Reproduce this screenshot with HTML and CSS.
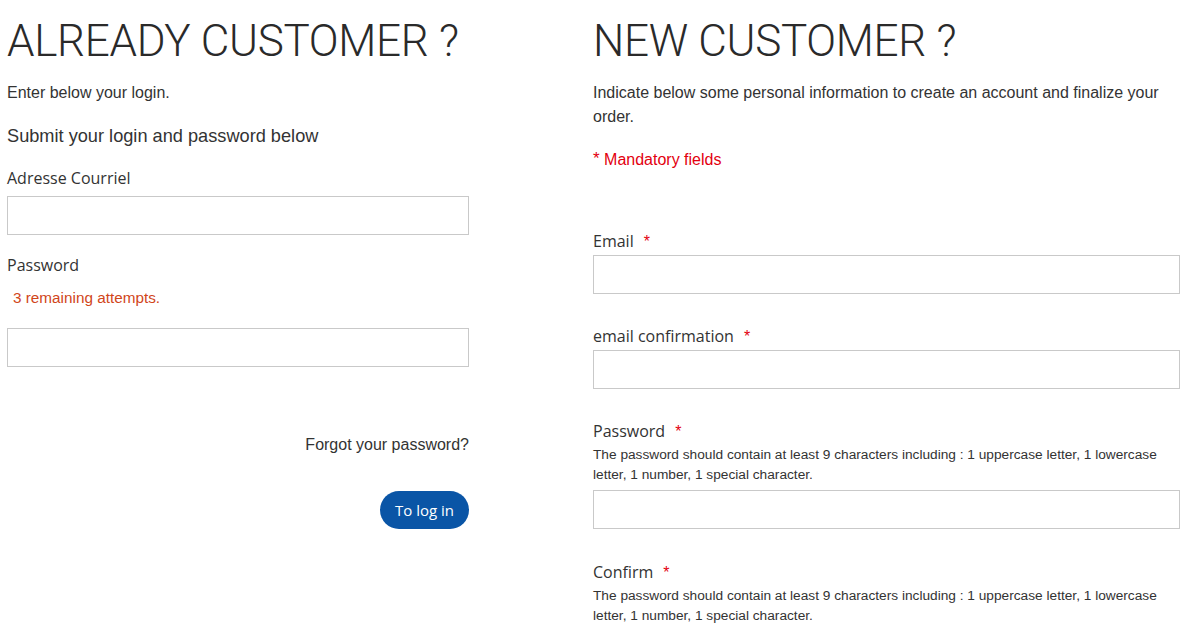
FILE: index.html
```html
<!DOCTYPE html>
<html lang="en">
<head>
<meta charset="utf-8">
<title>Login</title>
<link rel="stylesheet" href="styles.css">
</head>
<body>
<main class="page">
  <section class="col col-login">
    <h1 class="title">ALREADY CUSTOMER ?</h1>
    <p class="intro">Enter below your login.</p>
    <p class="subtitle">Submit your login and password below</p>
    <label class="label label-first">Adresse Courriel</label>
    <input class="field field-tight" type="text">
    <label class="label label-pass">Password</label>
    <p class="attempts">3 remaining attempts.</p>
    <input class="field field-after-attempts" type="password">
    <a class="forgot">Forgot your password?</a>
    <button class="btn-login" type="button">To log in</button>
  </section>
  <section class="col col-register">
    <h1 class="title">NEW CUSTOMER ?</h1>
    <p class="intro">Indicate below some personal information to create an account and finalize your order.</p>
    <p class="mandatory"><span class="mstar">*</span> Mandatory fields</p>
    <div class="group group-first">
      <label class="label">Email<span class="req">*</span></label>
      <input class="field" type="text">
    </div>
    <div class="group">
      <label class="label">email confirmation<span class="req">*</span></label>
      <input class="field" type="text">
    </div>
    <div class="group">
      <label class="label">Password<span class="req">*</span></label>
      <p class="help">The password should contain at least 9 characters including : 1 uppercase letter, 1 lowercase letter, 1 number, 1 special character.</p>
      <input class="field field-help" type="password">
    </div>
    <div class="group group-last">
      <label class="label">Confirm<span class="req">*</span></label>
      <p class="help">The password should contain at least 9 characters including : 1 uppercase letter, 1 lowercase letter, 1 number, 1 special character.</p>
    </div>
  </section>
</main>
</body>
</html>
```

FILE: styles.css
```css
* { box-sizing: border-box; }
html, body { margin: 0; padding: 0; background: #fff; }
body {
  font-family: "Liberation Sans", Arial, sans-serif;
  color: #333;
  width: 1200px;
  height: 630px;
  overflow: hidden;
}
.page {
  display: grid;
  grid-template-columns: 462px 587px;
  column-gap: 124px;
  padding-left: 7px;
  align-items: start;
}
.col {
  display: flex;
  flex-direction: column;
  align-items: stretch;
}
.title {
  margin: 19px 0 0 0;
  font-family: Roboto, "Liberation Sans", sans-serif;
  font-weight: 300;
  font-size: 44px;
  line-height: 44px;
  letter-spacing: -0.3px;
  color: #2a2a2a;
  white-space: nowrap;
}
.intro {
  margin: 18px 0 0 0;
  font-size: 16px;
  line-height: 24px;
}
.subtitle {
  margin: 19px 0 0 0;
  font-size: 18.2px;
  line-height: 24px;
}
.label {
  display: block;
  font-family: "Open Sans", "Noto Sans", sans-serif;
  font-size: 16px;
  line-height: 22px;
  color: #333;
}
.label-first { margin-top: 19px; }
.label-pass { margin-top: 19px; }
.field {
  display: block;
  width: 100%;
  height: 39px;
  margin: 2px 0 0 0;
  border: 1px solid #c9c9c9;
  border-radius: 0;
  background: #fff;
  padding: 0 10px;
  font-size: 16px;
  outline: none;
}
.field-tight { margin-top: 7px; }
.attempts {
  margin: 12px 0 0 0;
  padding-left: 6px;
  font-size: 15.3px;
  line-height: 20px;
  color: #d1461a;
}
.field-after-attempts { margin-top: 20px; }
.forgot {
  margin-top: 66px;
  align-self: flex-end;
  font-size: 16px;
  line-height: 24px;
  color: #333;
}
.btn-login {
  margin-top: 34px;
  align-self: flex-end;
  height: 38px;
  width: 89px;
  padding: 0;
  border: none;
  border-radius: 19px;
  background: #0a55a6;
  color: #fff;
  font-family: "Open Sans", "Noto Sans", sans-serif;
  font-size: 15px;
  cursor: pointer;
}
.mandatory {
  margin: 19px 0 0 0;
  font-size: 16px;
  line-height: 24px;
  color: #e3000f;
}
.mstar { position: relative; top: -1px; font-size: 17px; }
.group {
  display: flex;
  flex-direction: column;
  margin-top: 31px;
}
.group-first { margin-top: 58px; }
.group-last { margin-top: 32px; }
.req {
  color: #e3000f;
  margin-left: 10px;
  font-family: "Liberation Sans", sans-serif;
}
.help {
  margin: 2px 0 0 0;
  font-size: 13.7px;
  line-height: 20px;
  color: #333;
}
.field-help { margin-top: 5px; }
```
